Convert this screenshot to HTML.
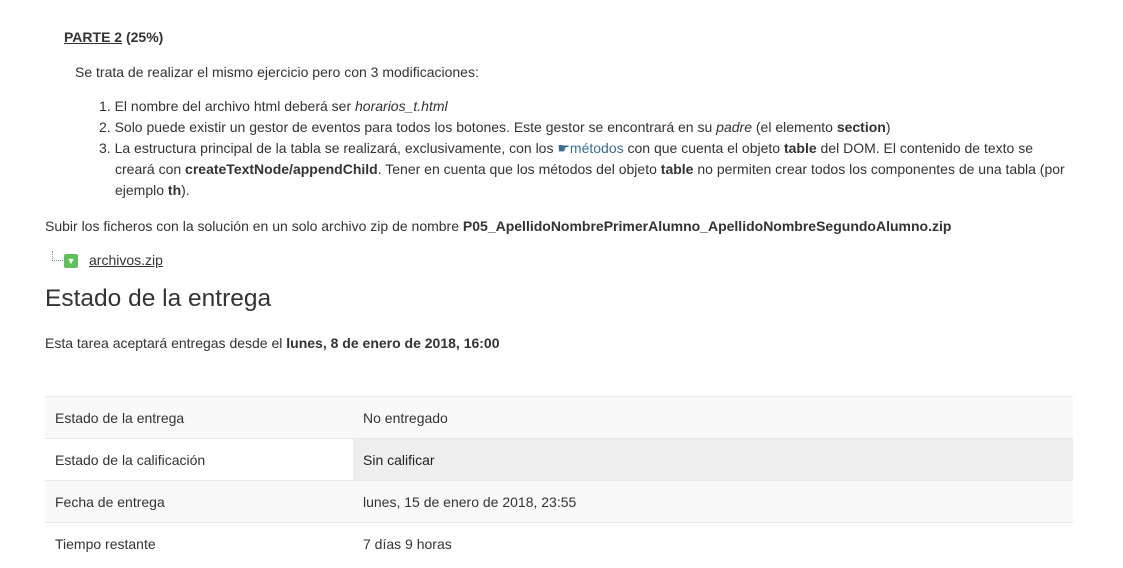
<!DOCTYPE html>
<html><head><meta charset="utf-8"><style>
body{margin:0;background:#fff;font-family:"Liberation Sans",sans-serif;font-size:14px;color:#333;width:1123px;height:568px;overflow:hidden;position:relative}
.a{position:absolute;white-space:nowrap}
a{color:#333}
.l{color:#3a6e8e}
table{position:absolute;left:45px;top:396px;width:1028px;border-collapse:collapse}
td{height:41px;padding:0 10px;border-top:1px solid #e8e8e8;font-size:14px}
tr:nth-child(odd) td{background:#f9f9f9}
</style></head><body>
<div class="a" style="left:64px;top:29px;font-weight:bold;font-size:14px"><span style="text-decoration:underline">PARTE 2</span> (25%)</div>
<div class="a" style="left:75px;top:64px">Se trata de realizar el mismo ejercicio pero con 3 modificaciones:</div>
<div class="a" style="left:99px;top:98px">1. El nombre del archivo html deberá ser <i>horarios_t.html</i></div>
<div class="a" style="left:99px;top:119px">2. Solo puede existir un gestor de eventos para todos los botones. Este gestor se encontrará en su <i>padre</i> (el elemento <b>section</b>)</div>
<div class="a" style="left:99px;top:140px">3. La estructura principal de la tabla se realizará, exclusivamente, con los <span class="l">☛métodos</span> con que cuenta el objeto <b>table</b> del DOM. El contenido de texto se</div>
<div class="a" style="left:115px;top:161px">creará con <b>createTextNode/appendChild</b>. Tener en cuenta que los métodos del objeto <b>table</b> no permiten crear todos los componentes de una tabla (por</div>
<div class="a" style="left:115px;top:182px">ejemplo <b>th</b>).</div>
<div class="a" style="left:45px;top:218px">Subir los ficheros con la solución en un solo archivo zip de nombre <b>P05_ApellidoNombrePrimerAlumno_ApellidoNombreSegundoAlumno.zip</b></div>
<div class="a" style="left:52px;top:251px;width:10px;height:9px;border-left:1px dotted #888;border-bottom:1px dotted #888"></div>
<div class="a" style="left:64px;top:254px;width:14px;height:14px;background:#5cc15a;border-radius:2px;color:#fff;font-size:9px;text-align:center;line-height:14px">▼</div>
<div class="a" style="left:89px;top:252px"><a href="#" style="text-decoration:underline">archivos.zip</a></div>
<div class="a" style="left:45px;top:285px;font-size:24.5px;color:#333">Estado de la entrega</div>
<div class="a" style="left:45px;top:335px">Esta tarea aceptará entregas desde el <b>lunes, 8 de enero de 2018, 16:00</b></div>
<table>
<tr><td style="width:288px">Estado de la entrega</td><td>No entregado</td></tr>
<tr><td>Estado de la calificación</td><td style="background:#eee;color:#222">Sin calificar</td></tr>
<tr><td>Fecha de entrega</td><td>lunes, 15 de enero de 2018, 23:55</td></tr>
<tr><td>Tiempo restante</td><td>7 días 9 horas</td></tr>
</table>
</body></html>
